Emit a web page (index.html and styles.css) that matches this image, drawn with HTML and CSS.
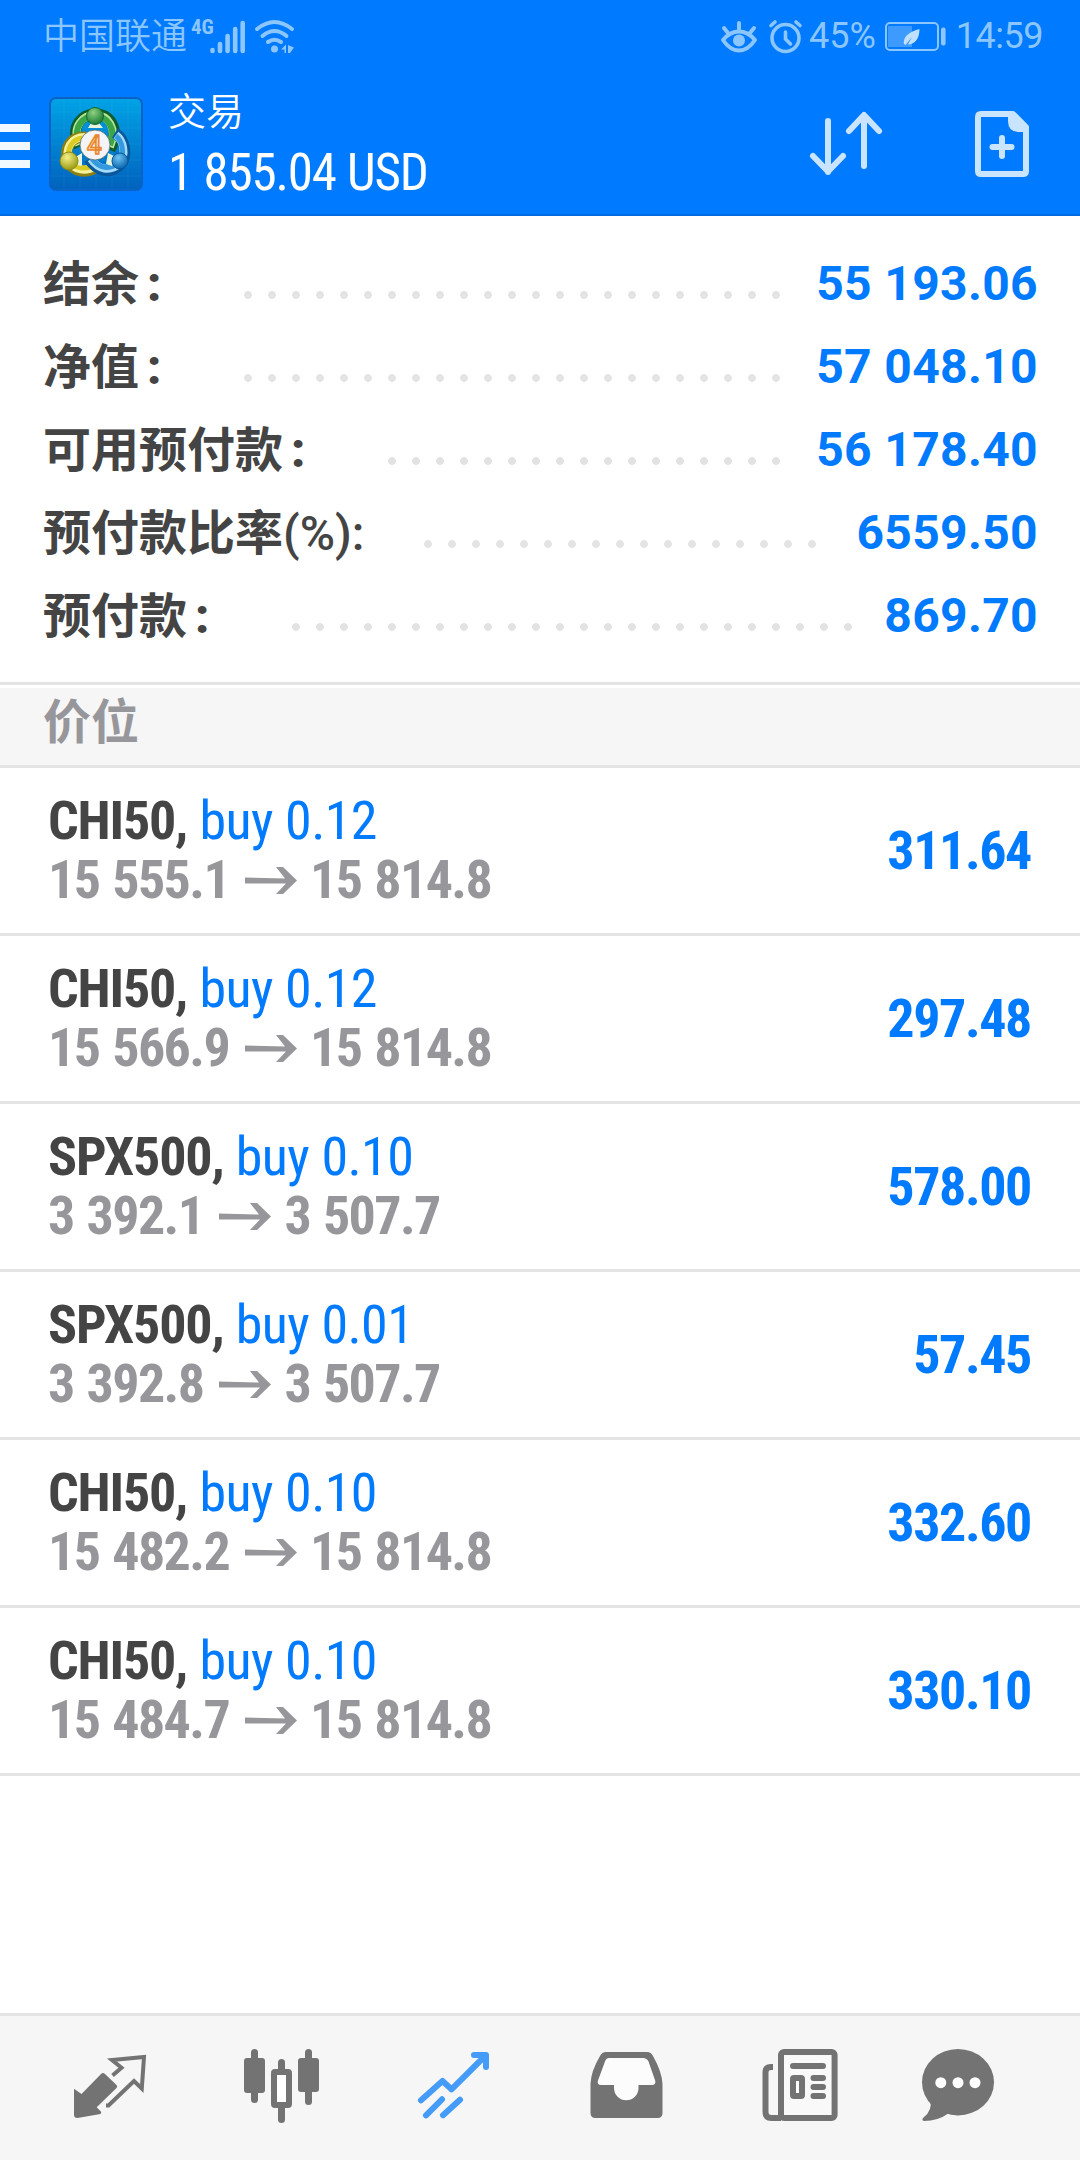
FILE: index.html
```
<!DOCTYPE html>
<html lang="zh-CN">
<head>
  <meta charset="UTF-8">
  <meta name="viewport" content="width=device-width, initial-scale=1.0">
  <title>交易</title>
  <link rel="stylesheet" href="styles.css">
</head>
<body>
  <svg class="defs" aria-hidden="true">
    <symbol id="arrow" viewBox="0 0 52 28">
      <path d="M0 11.5L40 12.5L31 1H38L52 14.5L38 28H31L41 17.5H0Z" fill="currentColor"/>
    </symbol>
  </svg>

  <header class="header">
    <div class="status-bar">
      <span class="carrier">中国联通</span>
      <span class="network">4G</span>
      <svg class="signal" width="36" height="34" viewBox="0 0 36 34" fill="none" stroke="currentColor" stroke-width="4.6" stroke-linecap="round">
        <path d="M2.5 30v1M10 24v7M17.600 16v15M25.200 9v22M32.700 3v28"/>
      </svg>
      <svg class="wifi" width="40" height="34" viewBox="0 0 40 34" fill="none" stroke="currentColor" stroke-width="4" stroke-linecap="round">
        <path d="M2 9Q19.500-5 37 9M7.500 16Q19.500 6 31.500 16M13 22Q19.500 17.500 26 22"/>
        <circle cx="19.500" cy="29" r="3.500" fill="currentColor" stroke="none"/>
        <path d="M26 29.500l5-5v8.500h-1.500v-3.500zM33 25l6 2.500-4 5.500h-2z" fill="currentColor" stroke="none"/>
      </svg>
      <div class="status-right">
        <svg class="eye" width="36" height="32" viewBox="0 0 36 32" fill="none" stroke="currentColor" stroke-width="4" stroke-linecap="round" stroke-linejoin="round">
          <path d="M2 19Q9 10.500 18 10.500T34 19Q27 29.500 18 29.500T2 19zM18 2v6M3 7l4 5M33 7l-4 5"/>
          <circle cx="18" cy="19.500" r="6" fill="currentColor" stroke="none"/>
        </svg>
        <svg class="alarm" width="34" height="34" viewBox="0 0 34 34" fill="none" stroke="currentColor" stroke-width="3.600" stroke-linecap="round">
          <circle cx="16.500" cy="18" r="13.500"/>
          <path d="M16.500 12v7l5 5M2 5.500l4-3.500M31 5.500l-4-3.500"/>
        </svg>
        <span class="percent">45%</span>
        <svg class="battery" width="62" height="30" viewBox="0 0 62 30">
          <rect x="1" y="1" width="52" height="27" rx="4" fill="none" stroke="currentColor" stroke-width="2"/>
          <rect x="3" y="4" width="24" height="21" fill="#3d9aff"/>
          <rect x="56" y="5.500" width="4.600" height="18" rx="2" fill="currentColor"/>
          <path d="M19 22Q17 12 34.500 7Q34 22 23 22.500L27 15L20.500 23Z" fill="#bfe0ff"/>
        </svg>
        <span class="clock">14:59</span>
      </div>
    </div>

    <div class="app-bar">
      <div class="menu"><i></i><i></i><i></i></div>
      <svg class="logo" width="94" height="94" viewBox="0 0 94 94">
        <defs>
          <linearGradient id="tile" x1="0" y1="0" x2="0" y2="1">
            <stop offset="0" stop-color="#00a3e6"/>
            <stop offset="1" stop-color="#0062bd"/>
          </linearGradient>
          <radialGradient id="green" cx=".4" cy=".3" r=".7">
            <stop offset="0" stop-color="#8fd07f"/>
            <stop offset="1" stop-color="#187e35"/>
          </radialGradient>
          <radialGradient id="yellow" cx=".4" cy=".3" r=".7">
            <stop offset="0" stop-color="#f4f08a"/>
            <stop offset="1" stop-color="#9a9b12"/>
          </radialGradient>
          <radialGradient id="blue" cx=".4" cy=".3" r=".7">
            <stop offset="0" stop-color="#6fc4f4"/>
            <stop offset="1" stop-color="#0863ab"/>
          </radialGradient>
        </defs>
        <rect x="1" y="1" width="92" height="92" rx="6" fill="url(#tile)" stroke="#0a62c4" stroke-width="2"/>
        <path d="M15 2v90M31 2v90M47 2v90M63 2v90M79 2v90M2 15h90M2 31h90M2 47h90M2 63h90M2 79h90" stroke="#fff" stroke-opacity=".05"/>
        <g fill="none">
          <path d="M30 50C20 28 34 17 46 17C60 17 72 30 61 53" stroke="#0c5f2c" stroke-width="11"/>
          <path d="M30 48C22 28 35 18 46 18C59 18 69 31 61 50" stroke="#b9e49a" stroke-width="8"/>
          <path d="M30 46C23 29 35 19 46 19C58 19 68 31 61 48" stroke="#3ba646" stroke-width="6"/>
          <path d="M37 40C20 39 15 53 19 63C24 76 38 77 49 69" stroke="#8b8011" stroke-width="11"/>
          <path d="M36 40C21 40 16 53 20 63C25 74 37 75 47 69" stroke="#f7f39c" stroke-width="8"/>
          <path d="M35 41C22 41 17 53 21 63C26 72 36 73 46 68" stroke="#dccb22" stroke-width="5"/>
          <path d="M66 36C76 42 79 58 72 67C61 79 47 73 40 62" stroke="#0a579b" stroke-width="11"/>
          <path d="M67 38C75 44 77 58 71 66C61 76 49 72 42 62" stroke="#a3dcfa" stroke-width="8"/>
          <path d="M67 39C74 45 76 58 70 65C61 74 50 71 43 62" stroke="#3599dd" stroke-width="5"/>
        </g>
        <path d="M39 31L54 31L50 26H42ZM25 61L33 56V69L28 68ZM59 56L67 60L63 69L57 67Z" fill="#e7f6dc"/>
        <circle cx="46" cy="19" r="8.500" fill="url(#green)" stroke="#12682b"/>
        <circle cx="20" cy="64" r="9" fill="url(#yellow)" stroke="#908a13"/>
        <circle cx="71" cy="64" r="8" fill="url(#blue)" stroke="#07569c"/>
        <circle cx="46" cy="48" r="15" fill="#f4f4f8" stroke="#536c63" stroke-width=".8"/>
        <text class="logo-mark" x="45.500" y="57" text-anchor="middle">4</text>
      </svg>
      <div class="title">
        <div class="title-name">交易</div>
        <div class="title-sum">1 855.04 USD</div>
      </div>
      <svg class="sort" width="74" height="64" viewBox="0 0 74 64" fill="none" stroke="currentColor" stroke-width="6" stroke-linecap="round" stroke-linejoin="round">
        <path d="M19 10v51M4 45l15 15.500L34 45M55 55V4.500M40 20L55 4L70 20"/>
      </svg>
      <svg class="new-order" width="54" height="66" viewBox="0 0 54 66" fill="none" stroke="currentColor" stroke-width="6" stroke-linejoin="round">
        <path d="M38 3H6Q3 3 3 6V60Q3 63 6 63H48Q51 63 51 60V16Z"/>
        <path d="M33 3V10Q33 21 44 21H53L50 13L39 2Z" fill="currentColor" stroke="none"/>
        <path d="M27 27v18M17.500 36h19" stroke-linecap="round"/>
      </svg>
    </div>
  </header>

  <section class="summary">
    <div class="summary-row"><span class="label">结余<span class="colon">:</span></span><span class="dots"></span><span class="value">55 193.06</span></div>
    <div class="summary-row"><span class="label">净值<span class="colon">:</span></span><span class="dots"></span><span class="value">57 048.10</span></div>
    <div class="summary-row"><span class="label">可用预付款<span class="colon">:</span></span><span class="dots"></span><span class="value">56 178.40</span></div>
    <div class="summary-row"><span class="label">预付款比率<span class="latin">(%):</span></span><span class="dots"></span><span class="value">6559.50</span></div>
    <div class="summary-row"><span class="label">预付款<span class="colon">:</span></span><span class="dots"></span><span class="value">869.70</span></div>
  </section>

  <h2 class="section-title">价位</h2>

  <main class="positions">
    <div class="position">
      <div class="deal">
        <div class="deal-name"><b>CHI50,</b> buy 0.12</div>
        <div class="deal-price">15 555.1<svg class="arrow"><use href="#arrow"/></svg>15 814.8</div>
      </div>
      <div class="profit">311.64</div>
    </div>
    <div class="position">
      <div class="deal">
        <div class="deal-name"><b>CHI50,</b> buy 0.12</div>
        <div class="deal-price">15 566.9<svg class="arrow"><use href="#arrow"/></svg>15 814.8</div>
      </div>
      <div class="profit">297.48</div>
    </div>
    <div class="position">
      <div class="deal">
        <div class="deal-name"><b>SPX500,</b> buy 0.10</div>
        <div class="deal-price">3 392.1<svg class="arrow"><use href="#arrow"/></svg>3 507.7</div>
      </div>
      <div class="profit">578.00</div>
    </div>
    <div class="position">
      <div class="deal">
        <div class="deal-name"><b>SPX500,</b> buy 0.01</div>
        <div class="deal-price">3 392.8<svg class="arrow"><use href="#arrow"/></svg>3 507.7</div>
      </div>
      <div class="profit">57.45</div>
    </div>
    <div class="position">
      <div class="deal">
        <div class="deal-name"><b>CHI50,</b> buy 0.10</div>
        <div class="deal-price">15 482.2<svg class="arrow"><use href="#arrow"/></svg>15 814.8</div>
      </div>
      <div class="profit">332.60</div>
    </div>
    <div class="position">
      <div class="deal">
        <div class="deal-name"><b>CHI50,</b> buy 0.10</div>
        <div class="deal-price">15 484.7<svg class="arrow"><use href="#arrow"/></svg>15 814.8</div>
      </div>
      <div class="profit">330.10</div>
    </div>
  </main>

  <nav class="tab-bar">
    <!-- quotes -->
    <svg class="tab" viewBox="0 0 96 96">
      <path d="M12 48.700L19.500 54L39 34Q41 32 43 34L54.500 45Q56 46.500 54.500 48L34.700 67.300L39.300 72L38.500 74L15.500 78Q12 78 12 75Z" fill="currentColor"/>
      <path d="M50.500 35.500L59.500 27.700L50 20L82 17L79.800 48.500L72 41L46.500 65.500H44" fill="none" stroke="currentColor" stroke-width="4"/>
    </svg>
    <!-- chart -->
    <svg class="tab" viewBox="0 0 96 96" fill="currentColor">
      <rect x="10" y="18" width="21" height="35" rx="3"/>
      <rect x="17" y="9" width="7" height="54" rx="3.500"/>
      <rect x="44" y="19" width="7" height="14" rx="3.500"/>
      <rect x="44" y="64" width="7" height="19" rx="3.500"/>
      <rect x="40" y="32" width="15" height="33" fill="#fff" stroke="currentColor" stroke-width="6" rx="1"/>
      <rect x="64" y="18" width="21" height="34" rx="3"/>
      <rect x="71" y="9" width="7" height="56" rx="3.500"/>
    </svg>
    <!-- trade -->
    <svg class="tab active" viewBox="0 0 96 96" fill="none" stroke="currentColor" stroke-width="6" stroke-linecap="round" stroke-linejoin="round">
      <path d="M15 60.300L36.500 41L45.500 49.300L79 16M68 15H80V27"/>
      <path d="M20 75.300L36 59.300M37 75.300L54 59.700"/>
    </svg>
    <!-- history -->
    <svg class="tab" viewBox="0 0 96 96" fill="currentColor">
      <path d="M28 12H69Q73 12 75 16Q84 32 84.500 44V73Q84.500 78 79.500 78H17.500Q12.500 78 12.500 73V44Q13 31 22 16Q24 12 28 12Z"/>
      <path d="M31 18H65Q69 18 70.500 21.500L77.300 41Q78 45 74 45H60.500V48A12.200 12.200 0 0 1 36 48V45H23Q19 45 19.800 41L27 21.500Q28 18 31 18Z" fill="#fcfcfc"/>
    </svg>
    <!-- news -->
    <svg class="tab" viewBox="0 0 96 96" fill="none" stroke="currentColor" stroke-width="6">
      <rect x="31" y="12" width="53.600" height="66" rx="3" fill="#f9f9f9"/>
      <path d="M23 27H21Q15.500 27 15.500 32V72Q15.500 78 21.500 78H31"/>
      <path d="M43 26H73M63.500 38H73M63.500 47H73M63.500 56H73" stroke-linecap="round"/>
      <rect x="43" y="38" width="9" height="18" rx="1" fill="#fff"/>
    </svg>
    <!-- chat -->
    <svg class="tab" viewBox="0 0 96 96" fill="currentColor">
      <ellipse cx="36" cy="42.200" rx="36" ry="33.200"/>
      <path d="M8 60Q11 70 1.500 77.500Q-1 80 2 81Q16 81 27 73Z"/>
      <g fill="#fff">
        <circle cx="18.800" cy="42.700" r="5.500"/>
        <circle cx="36" cy="42.700" r="5.500"/>
        <circle cx="53" cy="42.700" r="5.500"/>
      </g>
    </svg>
  </nav>
</body>
</html>
```

FILE: styles.css
```
* {
  margin: 0;
  padding: 0;
  box-sizing: border-box;
}

body {
  display: flex;
  flex-direction: column;
  width: 1080px;
  height: 2160px;
  overflow: hidden;
  background: #fff;
  font-family: Roboto, 'Noto Sans CJK SC', sans-serif;
}

svg {
  display: block;
  flex: none;
  overflow: visible;
}

.defs {
  display: none;
}

.header {
  height: 216px;
  background: #007aff;
  border-bottom: 2px solid #006be0;
}

.status-bar {
  display: flex;
  align-items: center;
  height: 72px;
  padding: 1px 37px 0 43px;
  color: #8cc6ff;
  font-size: 36px;
}

.carrier {
  width: 148px;
  font-weight: 350;
  line-height: 78px;
}

.network {
  width: 19px;
  font-family: 'Roboto Condensed', Roboto, sans-serif;
  font-stretch: 75%;
  font-size: 21px;
  font-weight: 700;
  line-height: 20px;
  margin-top: -19px;
}

.wifi {
  margin-left: 9px;
}

.status-right {
  display: flex;
  align-items: center;
  margin-left: auto;
}

.eye {
  margin-right: 12px;
}

.alarm {
  margin-right: 6px;
}

.battery {
  margin: 0 9px;
}

.percent,
.clock {
  line-height: 79px;
}

.clock {
  letter-spacing: -0.5px;
}

.app-bar {
  display: flex;
  align-items: flex-start;
  height: 142px;
  color: #c9e4ff;
}

.menu {
  display: flex;
  flex-direction: column;
  gap: 10px;
  width: 30px;
  padding-top: 52px;
}

.menu i {
  height: 8px;
  background: #f0f9ff;
}

.logo {
  margin: 25px 0 0 19px;
}

.logo-mark {
  font-family: Roboto, sans-serif;
  font-size: 26px;
  font-weight: 500;
  fill: #ffd79a;
  stroke: #e8862e;
  stroke-width: 1.5px;
}

.title {
  margin: 16px 0 0 25px;
  color: #fff;
  white-space: nowrap;
}

.title-name {
  font-size: 38px;
  font-weight: 350;
  line-height: 48px;
}

.title-sum {
  font-family: 'Roboto Condensed', Roboto, sans-serif;
  font-stretch: 75%;
  font-size: 51px;
  letter-spacing: -1.2px;
  word-spacing: 1px;
  line-height: 60px;
  margin-top: 7px;
}

.sort {
  margin: 39px 92px 0 auto;
}

.new-order {
  margin: 39px 51px 0 0;
}

.summary {
  height: 472px;
  padding: 27px 42px 0 43px;
  /* divider sits 3px above the section title */
  background: linear-gradient(#e4e4e4, #e4e4e4) 0 466px / 100% 3px no-repeat;
}

.summary-row {
  display: flex;
  align-items: center;
  height: 83px;
  font-size: 48px;
  font-weight: 700;
}

.label {
  margin-top: -4px;
  color: #444;
  font-family: 'Noto Sans CJK SC', sans-serif;
  line-height: 75px;
}

.colon {
  display: inline-block;
  width: 48px;
  padding-left: 8px;
  font-family: Roboto, sans-serif;
  font-weight: 900;
}

.latin {
  margin-right: 3px;
  font-family: Roboto, sans-serif;
  font-weight: 500;
}

.dots {
  flex: 1;
  height: 8px;
  margin: 21px 28px 0 57px;
  background: radial-gradient(circle at 4px 4px, #e3e3e3 3.5px, transparent 4.2px) 0 0 / 24px 8px repeat-x;
}

.value {
  margin-top: -2px;
  color: #007aff;
  letter-spacing: 0.35px;
}

.section-title {
  height: 80px;
  padding-left: 43px;
  background: #f6f6f6;
  border-bottom: 3px solid #e4e4e4;
  color: #97979b;
  font-family: 'Noto Sans CJK SC', sans-serif;
  font-size: 48px;
  font-weight: 700;
  line-height: 61px;
}

.positions {
  flex: 1;
  font-family: 'Roboto Condensed', Roboto, sans-serif;
  font-stretch: 75%;
  font-size: 54px;
}

.position {
  display: flex;
  justify-content: space-between;
  height: 168px;
  padding: 23px 49px 0 48px;
  border-bottom: 3px solid #e4e4e4;
}

.deal-name,
.deal-price {
  line-height: 59px;
  white-space: nowrap;
}

.deal-name {
  color: #007aff;
  letter-spacing: -0.6px;
  word-spacing: 0.5px;
}

.deal-name b {
  color: #444;
  letter-spacing: -1.2px;
}

.deal-price {
  display: flex;
  align-items: center;
  color: #97979b;
  font-weight: 700;
  letter-spacing: -1.6px;
  word-spacing: 2px;
}

.arrow {
  width: 52px;
  height: 28px;
  margin: 0 13px 0 16px;
}

.profit {
  color: #007aff;
  font-weight: 700;
  letter-spacing: -1.4px;
  line-height: 120px;
}

.tab-bar {
  display: flex;
  gap: 76px;
  height: 147px;
  padding: 24px 0 0 62px;
  background: #f6f6f6;
  border-top: 3px solid #e4e4e4;
  color: #737373;
}

.tab {
  width: 96px;
  height: 96px;
}

.tab.active {
  color: #459bf8;
}
```
